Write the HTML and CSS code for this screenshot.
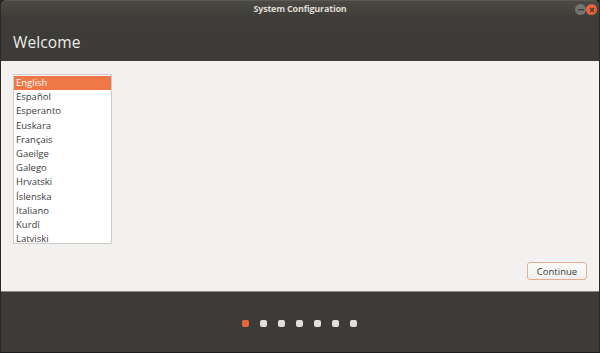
FILE: index.html
```html
<!DOCTYPE html>
<html lang="en">
<head>
  <meta charset="UTF-8">
  <title>System Configuration</title>
  <link rel="stylesheet" href="styles.css">
</head>
<body>
  <div class="window">
    <header class="header">
      <div class="titlebar">
        <span class="title">System Configuration</span>
        <div class="win-btns">
          <span class="win-btn min"><svg width="6" height="2" viewBox="0 0 6 2"><rect width="6" height="1.4" fill="#3c3b37"/></svg></span>
          <span class="win-btn close"><svg width="6" height="6" viewBox="0 0 6 6"><path d="M1 1L5 5M5 1L1 5" stroke="#3c3b37" stroke-width="1.3"/></svg></span>
        </div>
      </div>
      <h1 class="heading">Welcome</h1>
    </header>

    <main class="content">
      <ul class="lang-list">
        <li class="selected">English</li>
        <li>Español</li>
        <li>Esperanto</li>
        <li>Euskara</li>
        <li>Français</li>
        <li>Gaeilge</li>
        <li>Galego</li>
        <li>Hrvatski</li>
        <li>Íslenska</li>
        <li>Italiano</li>
        <li>Kurdî</li>
        <li>Latviski</li>
      </ul>
      <div class="actions">
        <button class="continue">Continue</button>
      </div>
    </main>

    <footer class="footer">
      <span class="dot active"></span>
      <span class="dot"></span>
      <span class="dot"></span>
      <span class="dot"></span>
      <span class="dot"></span>
      <span class="dot"></span>
      <span class="dot"></span>
    </footer>
  </div>
</body>
</html>
```

FILE: styles.css
```css
/* Reset */
* { box-sizing: border-box; }
html, body { margin: 0; padding: 0; overflow: hidden; }

body {
  font-family: "Open Sans", "DejaVu Sans", sans-serif;
  background: #1f1e1b;
}

.window {
  width: 600px;
  height: 353px;
  display: flex;
  flex-direction: column;
  border-left: 1px solid #2a2925;
  border-right: 1px solid #2a2925;
  border-bottom: 1px solid #1c1b19;
}

/* Header */
.header {
  height: 61px;
  background: linear-gradient(#4a4944 0, #3d3c38 18px, #3c3b37 100%);
  border-top: 1px solid #5a5953;
  border-radius: 5px 5px 0 0;
  padding: 0 12px;
  display: flex;
  flex-direction: column;
}

.titlebar {
  height: 15px;
  display: flex;
  align-items: center;
  justify-content: center;
  position: relative;
}
.title {
  color: #dfdbd2;
  font-size: 9px;
  font-weight: 700;
  letter-spacing: -0.2px;
}
.win-btns {
  position: absolute;
  right: -10px;
  top: 3px;
  display: flex;
  gap: 0;
}
.win-btn {
  width: 11px;
  height: 11px;
  border-radius: 50%;
  display: flex;
  align-items: center;
  justify-content: center;
}
.win-btn.min { background: #75746f; }
.win-btn.close { background: #e9643a; }

.heading {
  margin: 15px 0 0;
  color: #eeece7;
  font-size: 15.5px;
  font-weight: 400;
  letter-spacing: 0.1px;
}

/* Content */
.content {
  flex: 1;
  background: #f2f1f0;
  padding: 13px 12px 11px;
  display: flex;
  flex-direction: column;
  justify-content: space-between;
}

.lang-list {
  list-style: none;
  margin: 0;
  padding: 1px 0;
  width: 99px;
  height: 170px;
  overflow: hidden;
  background: #fff;
  border: 1px solid #cfccc7;
}
.lang-list li {
  height: 14.2px;
  line-height: 14px;
  padding: 0 2px;
  font-size: 9.5px;
  color: #3c3c3c;
}
.lang-list li.selected {
  background: #f07746;
  color: #fff;
}

.actions {
  display: flex;
  justify-content: flex-end;
}
.continue {
  width: 60px;
  height: 18px;
  padding: 0;
  border: 1px solid #e4ae95;
  border-radius: 3px;
  background: linear-gradient(#fbfbfa, #f0efed);
  color: #3c3c3c;
  font-family: inherit;
  font-size: 9.5px;
}

/* Footer */
.footer {
  height: 61px;
  background: #3c3b37;
  border-top: 1px solid #8a8983;
  display: flex;
  align-items: center;
  justify-content: center;
  gap: 11px;
  padding-top: 2px;
  padding-right: 2px;
}
.dot {
  width: 7px;
  height: 7px;
  border-radius: 2px;
  background: #e0dfdc;
}
.dot.active { background: #e5673a; }
```
